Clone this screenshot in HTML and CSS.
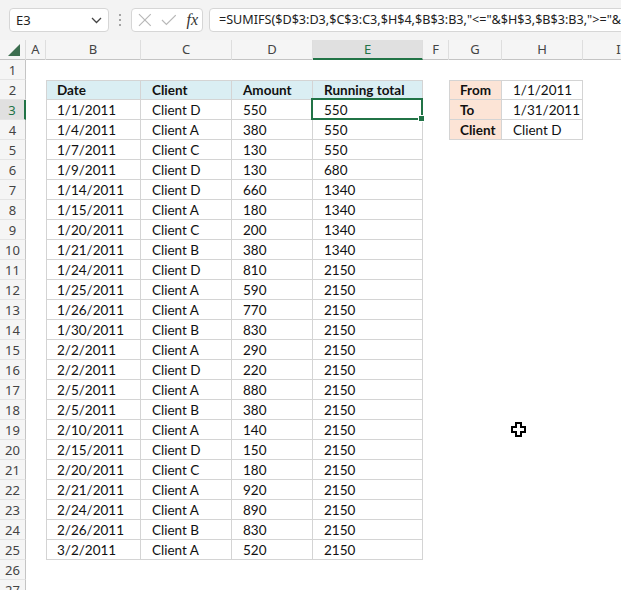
FILE: index.html
```html
<!DOCTYPE html>
<html>
<head>
<meta charset="utf-8">
<link rel="stylesheet" href="styles.css">
</head>
<body>
<div class="app">
  <div class="toolbar">
    <div class="namebox">
      <span class="nb-text">E3</span>
      <svg class="chev" width="11" height="7" viewBox="0 0 11 7"><path d="M1 1 L5.5 5.5 L10 1" fill="none" stroke="#444" stroke-width="1.3"/></svg>
    </div>
    <div class="dots"><span></span><span></span><span></span></div>
    <div class="iconbox">
      <svg width="14" height="14" viewBox="0 0 14 14"><path d="M1 1 L13 13 M13 1 L1 13" stroke="#b8b8b8" stroke-width="1.2" fill="none"/></svg>
      <svg width="16" height="12" viewBox="0 0 16 12"><path d="M1 6 L5.5 10.5 L15 1" stroke="#b8b8b8" stroke-width="1.2" fill="none"/></svg>
      <span class="fx">fx</span>
    </div>
    <div class="formula">=SUMIFS($D$3:D3,$C$3:C3,$H$4,$B$3:B3,"&lt;="&amp;$H$3,$B$3:B3,"&gt;="&amp;$H$3,$B$3:B3)</div>
  </div>

  <div class="sheet" id="sheet">
    <div class="row hdr">
      <div class="corner"><svg width="14" height="14" viewBox="0 0 14 14"><polygon points="13,1 13,13 1,13" fill="#3c6e4f"/></svg></div>
      <div class="ch">A</div><div class="ch">B</div><div class="ch">C</div><div class="ch">D</div><div class="ch sel">E</div><div class="ch">F</div><div class="ch">G</div><div class="ch">H</div><div class="ch">I</div>
    </div>
  </div>

  <svg class="cursor" width="15" height="15" viewBox="0 0 15 15" shape-rendering="crispEdges"><polygon points="5,1 10,1 10,5 14,5 14,10 10,10 10,14 5,14 5,10 1,10 1,5 5,5" fill="#fff" stroke="#000" stroke-width="1.6"/></svg>
</div>
<script src="script.js"></script>
</body>
</html>
```
FILE: script.js
```js
var data = [
  ["1/1/2011","Client D","550","550"],
  ["1/4/2011","Client A","380","550"],
  ["1/7/2011","Client C","130","550"],
  ["1/9/2011","Client D","130","680"],
  ["1/14/2011","Client D","660","1340"],
  ["1/15/2011","Client A","180","1340"],
  ["1/20/2011","Client C","200","1340"],
  ["1/21/2011","Client B","380","1340"],
  ["1/24/2011","Client D","810","2150"],
  ["1/25/2011","Client A","590","2150"],
  ["1/26/2011","Client A","770","2150"],
  ["1/30/2011","Client B","830","2150"],
  ["2/2/2011","Client A","290","2150"],
  ["2/2/2011","Client D","220","2150"],
  ["2/5/2011","Client A","880","2150"],
  ["2/5/2011","Client B","380","2150"],
  ["2/10/2011","Client A","140","2150"],
  ["2/15/2011","Client D","150","2150"],
  ["2/20/2011","Client C","180","2150"],
  ["2/21/2011","Client A","920","2150"],
  ["2/24/2011","Client A","890","2150"],
  ["2/26/2011","Client B","830","2150"],
  ["3/2/2011","Client A","520","2150"]
];
var side = {2:["From","1/1/2011"],3:["To","1/31/2011"],4:["Client","Client D"]};
var sheet = document.getElementById("sheet");
function cell(cls, txt){ var d=document.createElement("div"); d.className="c "+(cls||""); d.textContent=txt||""; return d; }
for (var r=1; r<=27; r++){
  var row=document.createElement("div"); row.className="row";
  var rh=cell("rh"+(r===3?" sel":""), String(r)); row.appendChild(rh);
  row.appendChild(cell("",""));
  var vals=null, cls="";
  if (r===2){ vals=["Date","Client","Amount","Running total"]; cls="t th"; }
  else if (r>=3 && r<=25){ vals=data[r-3]; cls="t"; }
  for (var i=0;i<4;i++){
    if (vals){ var c=cell(cls+(i===0?" tl":""), vals[i]); if(r===3&&i===3){c.className+=" active";} row.appendChild(c); }
    else row.appendChild(cell("",""));
  }
  row.appendChild(cell("",""));
  if (side[r]){
    row.appendChild(cell("t sk tl"+(r===2?" top":""), side[r][0]));
    row.appendChild(cell("t"+(r===2?" top":""), side[r][1]));
  } else { row.appendChild(cell("","")); row.appendChild(cell("","")); }
  row.appendChild(cell("",""));
  sheet.appendChild(row);
}
```
FILE: styles.css
```css
html, body { margin: 0; padding: 0; }
body { background: #fff; }
.app {
  position: relative;
  width: 621px;
  height: 590px;
  overflow: hidden;
  background: #fff;
}
.toolbar {
  height: 40px;
  background: #f3f3f3;
  display: flex;
  align-items: flex-start;
  padding: 8px 0 0 9px;
  box-sizing: border-box;
}
.namebox {
  width: 100px;
  height: 24px;
  box-sizing: border-box;
  background: #fff;
  border: 1px solid #d6d6d6;
  border-radius: 4px;
  display: flex;
  align-items: center;
  justify-content: space-between;
  padding: 0 6px 0 6px;
  font-family: "Noto Sans", sans-serif;
  font-size: 13px;
  color: #222;
}
.chev { margin-top: 1px; }
.dots {
  width: 22px;
  height: 24px;
  display: flex;
  flex-direction: column;
  align-items: center;
  justify-content: center;
  gap: 3px;
}
.dots span { width: 2px; height: 2px; background: #8a8a8a; border-radius: 1px; }
.iconbox {
  width: 72px;
  height: 24px;
  box-sizing: border-box;
  background: #fff;
  border: 1px solid #d6d6d6;
  border-radius: 4px;
  display: flex;
  align-items: center;
  padding: 0 4px 0 6px;
  gap: 9px;
}
.fx {
  font-family: "Liberation Serif", serif;
  font-style: italic;
  font-size: 16px;
  color: #333;
  margin-left: 1px;
}
.formula {
  flex: 1;
  margin-left: 6px;
  margin-right: -10px;
  height: 24px;
  box-sizing: border-box;
  background: #fff;
  border: 1px solid #d6d6d6;
  border-radius: 4px;
  padding: 0 0 0 9px;
  font-family: "Noto Sans", sans-serif;
  font-size: 12.6px;
  line-height: 22px;
  color: #222;
  white-space: nowrap;
  overflow: hidden;
}
.sheet { }
.row {
  display: grid;
  grid-template-columns: 26px 20px 95px 91px 81px 110px 26px 53px 81px 72px;
  height: 20px;
}
.hdr { background: #f5f5f5; border-bottom: 1px solid #c4c4c4; box-sizing: border-box; }
.corner { border-right: 1px solid #dcdcdc; display: flex; align-items: center; justify-content: center; padding-left: 3px; }
.ch {
  font-family: "Noto Sans", sans-serif;
  font-size: 13px;
  color: #444;
  text-align: center;
  line-height: 19px;
  border-right: 1px solid #dedede;
}
.ch.sel { background: #e0e0e0; color: #217346; border-bottom: 2px solid #217346; line-height: 18px; }
.c {
  box-sizing: border-box;
  font-family: Lato, "Liberation Sans", sans-serif;
  font-size: 13.5px;
  line-height: 20px;
  color: #111;
  white-space: nowrap;
  overflow: hidden;
}
.rh {
  background: #f5f5f5;
  border-right: 1px solid #c4c4c4;
  border-bottom: 1px solid #e4e4e4;
  font-family: "Noto Sans", sans-serif;
  font-size: 13px;
  color: #444;
  text-align: center;
  line-height: 19px;
  padding-top: 1px;
}
.rh.sel { background: #e0e0e0; color: #217346; border-right: 2px solid #217346; }
.t {
  border-right: 1px solid #d4d4d4;
  border-bottom: 1px solid #d4d4d4;
  padding-left: 11px;
  padding-top: 2px;
  line-height: 17px;
}
.tl { border-left: 1px solid #d4d4d4; padding-left: 10px; }
.th { background: #daeef3; font-weight: bold; border-top: 1px solid #d4d4d4; padding-top: 1px; line-height: 17px; }
.top { border-top: 1px solid #d4d4d4; padding-top: 1px; line-height: 17px; }
.sk { background: #fce4d6; font-weight: bold; }
.active { position: relative; overflow: visible; }
.active::after {
  content: "";
  position: absolute;
  left: -2px; top: -2px; right: -1px; bottom: -1px;
  border: 2px solid #217346;
}
.active::before {
  content: "";
  position: absolute;
  right: -3px; bottom: -3px;
  width: 5px; height: 5px;
  background: #217346;
  border: 1px solid #fff;
  z-index: 2;
}
.cursor { position: absolute; left: 511px; top: 422px; }
```
